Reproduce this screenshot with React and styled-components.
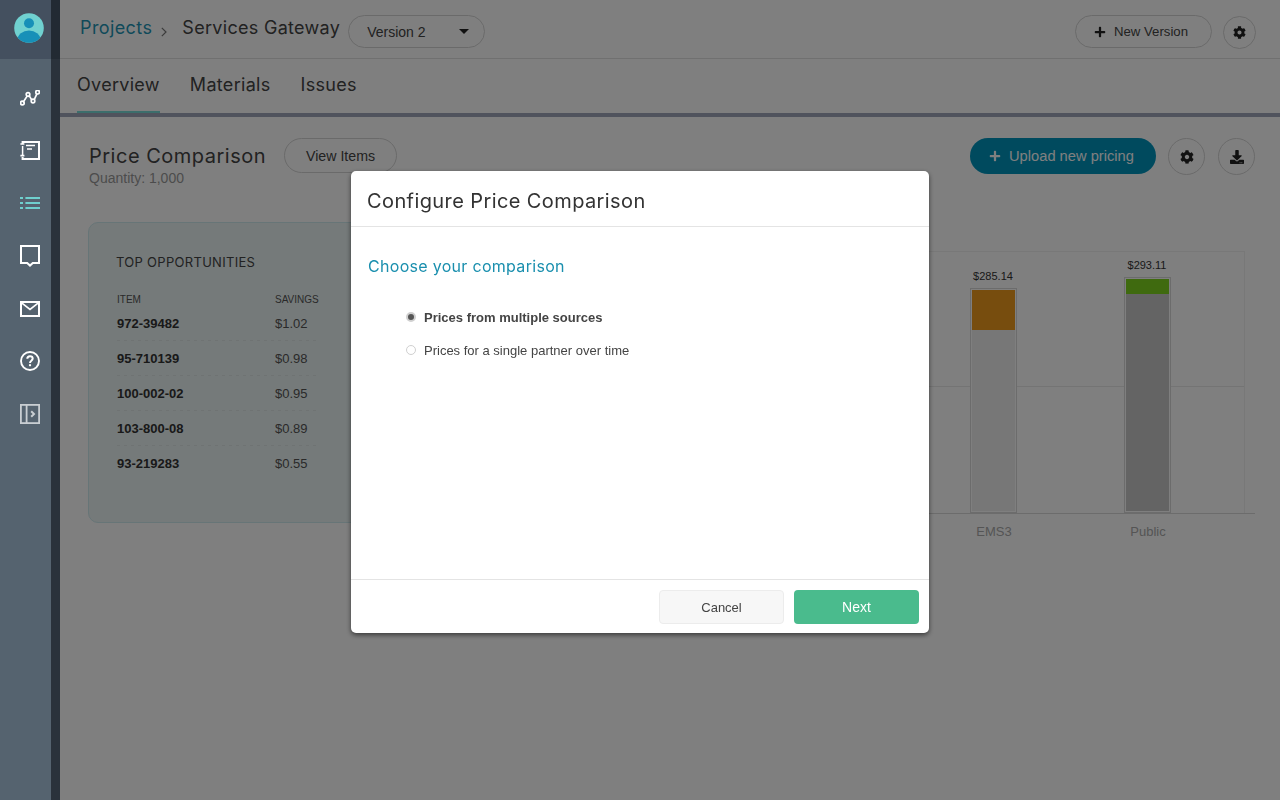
import styled, { createGlobalStyle } from 'styled-components';
import { FaCog, FaPlus, FaDownload } from 'react-icons/fa';

const HEADING_FONT = `Inter, 'Open Sans', sans-serif`;

const opportunities = [
  { item: '972-39482', savings: '$1.02' },
  { item: '95-710139', savings: '$0.98' },
  { item: '100-002-02', savings: '$0.95' },
  { item: '103-800-08', savings: '$0.89' },
  { item: '93-219283', savings: '$0.55' },
];

const bars = [
  { name: 'EMS3', value: '$285.14', height: 225, tone: '#eeeeee', top: '#ee9a1c', topHeight: 40 },
  { name: 'Public', value: '$293.11', height: 236, tone: '#c8c8c8', top: '#7fd41f', topHeight: 15 },
];

const GraphIcon = () => (
  <svg width="20" height="16" viewBox="0 0 20 16" fill="none" stroke="#fff" strokeWidth="1.7">
    <path d="M3 12.5 7.4 5.6M9 5.4l3 5M14 10.2 17 3.6" />
    <circle cx="2.4" cy="13" r="1.8" />
    <circle cx="8" cy="4.5" r="1.8" />
    <circle cx="13" cy="11" r="1.8" />
    <circle cx="17.6" cy="2.2" r="1.8" />
  </svg>
);

const NotebookIcon = () => (
  <svg width="20" height="19" viewBox="0 0 20 19" fill="none" stroke="#fff" strokeWidth="2">
    <path d="M2.6 3V1h16.4v17H2.6v-2" />
    <path d="M2.6 5v9" strokeWidth="1.5" />
    <path d="M0.4 3h4M0.4 14.6h4" strokeWidth="1.6" />
    <path d="M6 4.6h9M7 8h5" strokeWidth="1.5" />
  </svg>
);

const ListIcon = () => (
  <svg width="20" height="14" viewBox="0 0 20 14" fill="none" stroke="#6fd0ce" strokeWidth="2.2">
    <path d="M0 2h3M5.4 2H20M0 7h3M5.4 7H20M0 12h3M5.4 12H20" />
  </svg>
);

const ChatIcon = () => (
  <svg width="20" height="22" viewBox="0 0 20 22" fill="none" stroke="#fff" strokeWidth="2">
    <path d="M1 1h18v17h-6.2L10 20.6 7.2 18H1z" />
  </svg>
);

const MailIcon = () => (
  <svg width="20" height="16" viewBox="0 0 20 16" fill="none" stroke="#fff" strokeWidth="2">
    <rect x="1" y="1" width="18" height="14" />
    <path d="M1 1.4 10 8.4l9-7" strokeWidth="1.7" />
  </svg>
);

const HelpIcon = () => (
  <svg width="20" height="20" viewBox="0 0 20 20" fill="none" stroke="#fff" strokeWidth="1.9">
    <circle cx="10" cy="10" r="9" />
    <path d="M7.3 7.8C7.3 6.2 8.5 5.2 10 5.2s2.7 1 2.7 2.4c0 2.2-2.7 2-2.7 4.3" strokeWidth="2" />
    <path d="M10 13.2v2" strokeWidth="2.1" />
  </svg>
);

const PanelIcon = () => (
  <svg width="20" height="20" viewBox="0 0 20 20" fill="none" stroke="#c9ced2" strokeWidth="1.8">
    <rect x=".9" y=".9" width="18.2" height="18.2" />
    <path d="M6.6 1v18" />
    <path d="M11.2 7.2 14 10l-2.8 2.8" strokeWidth="2" />
  </svg>
);

const AvatarIcon = () => (
  <svg width="30" height="30" viewBox="0 0 30 30">
    <defs>
      <clipPath id="avatar-clip">
        <circle cx="15" cy="15" r="14.8" />
      </clipPath>
    </defs>
    <circle cx="15" cy="15" r="14.8" fill="#70d1d0" />
    <g clipPath="url(#avatar-clip)" fill="#1790b8">
      <circle cx="15" cy="10.2" r="5" />
      <ellipse cx="15" cy="27" rx="11.5" ry="9.6" />
    </g>
  </svg>
);

const navItems = [
  { key: 'graph', icon: <GraphIcon /> },
  { key: 'notebook', icon: <NotebookIcon /> },
  { key: 'list', icon: <ListIcon /> },
  { key: 'chat', icon: <ChatIcon /> },
  { key: 'mail', icon: <MailIcon /> },
  { key: 'help', icon: <HelpIcon /> },
  { key: 'panel', icon: <PanelIcon /> },
];

function App() {
  return (
    <Page>
      <GlobalStyle />
      <Sidebar>
        <AvatarRow>
          <AvatarIcon />
        </AvatarRow>
        <NavList>
          {navItems.map(nav => (
            <NavItem key={nav.key}>{nav.icon}</NavItem>
          ))}
        </NavList>
      </Sidebar>

      <Main>
        <TopBar>
          <ProjectsLink>Projects</ProjectsLink>
          <Crumb width="6" height="10" viewBox="0 0 6 10" fill="none" stroke="#777" strokeWidth="1.2">
            <path d="M.8.8 5 5 .8 9.2" />
          </Crumb>
          <ProjectName>Services Gateway</ProjectName>
          <VersionSelect>
            Version 2
            <Caret />
          </VersionSelect>
          <TopActions>
            <NewVersionButton>
              <FaPlus size={12} />
              New Version
            </NewVersionButton>
            <TopGear size={33}>
              <FaCog size={13} />
            </TopGear>
          </TopActions>
        </TopBar>

        <Tabs>
          <Tab active>Overview</Tab>
          <Tab>Materials</Tab>
          <Tab>Issues</Tab>
        </Tabs>

        <Content>
          <TitleRow>
            <TitleBlock>
              <PageTitle>Price Comparison</PageTitle>
              <Quantity>Quantity: 1,000</Quantity>
            </TitleBlock>
            <ViewItemsButton>View Items</ViewItemsButton>
            <TitleActions>
              <UploadButton>
                <FaPlus size={12} />
                Upload new pricing
              </UploadButton>
              <RoundButton size={37}>
                <FaCog size={14} />
              </RoundButton>
              <RoundButton size={37}>
                <FaDownload size={14} />
              </RoundButton>
            </TitleActions>
          </TitleRow>

          <Panels>
            <OpportunitiesCard>
              <CardTitle>TOP OPPORTUNITIES</CardTitle>
              <TableHead>
                <span>ITEM</span>
                <span>SAVINGS</span>
              </TableHead>
              {opportunities.map(row => (
                <TableRow key={row.item}>
                  <ItemCode>{row.item}</ItemCode>
                  <Savings>{row.savings}</Savings>
                </TableRow>
              ))}
            </OpportunitiesCard>

            <Chart>
              <PlotFrame>
                <Plot>
                  {bars.map(bar => (
                    <BarSlot key={bar.name}>
                      <BarValue>{bar.value}</BarValue>
                      <Bar height={bar.height}>
                        <BarFill tone={bar.top} height={bar.topHeight} />
                        <BarFill tone={bar.tone} grow />
                      </Bar>
                    </BarSlot>
                  ))}
                </Plot>
              </PlotFrame>
              <AxisLabels>
                {bars.map(bar => (
                  <AxisLabel key={bar.name}>{bar.name}</AxisLabel>
                ))}
              </AxisLabels>
            </Chart>
          </Panels>
        </Content>
      </Main>

      <Overlay>
        <Modal>
          <ModalHeader>Configure Price Comparison</ModalHeader>
          <ModalBody>
            <ModalSubtitle>Choose your comparison</ModalSubtitle>
            <RadioGroup>
              <RadioRow>
                <Radio checked />
                <RadioLabel checked>Prices from multiple sources</RadioLabel>
              </RadioRow>
              <RadioRow>
                <Radio />
                <RadioLabel>Prices for a single partner over time</RadioLabel>
              </RadioRow>
            </RadioGroup>
          </ModalBody>
          <ModalFooter>
            <CancelButton>Cancel</CancelButton>
            <NextButton>Next</NextButton>
          </ModalFooter>
        </Modal>
      </Overlay>
    </Page>
  );
}

const GlobalStyle = createGlobalStyle`
  html, body {
    margin: 0;
    padding: 0;
    height: 100%;
    overflow: hidden;
    background: #fff;
    font-family: 'Liberation Sans', Arial, sans-serif;
    color: #333;
  }
  button {
    font-family: inherit;
    cursor: pointer;
  }
`;

const Page = styled.div`
  display: flex;
  width: 1280px;
  height: 800px;
  overflow: hidden;
`;

const Sidebar = styled.nav`
  position: relative;
  z-index: 3;
  flex: 0 0 60px;
  box-sizing: border-box;
  background: #2a323b;
`;

const AvatarRow = styled.div`
  display: flex;
  align-items: center;
  box-sizing: border-box;
  height: 59px;
  padding: 0 0 3px 14px;
  background: linear-gradient(to right, #44505f 51px, #222a33 51px);
`;

const NavList = styled.div`
  width: 51px;
  height: 741px;
  box-sizing: border-box;
  padding: 12.5px 0 0 9px;
  background: #55636f;
`;

const NavItem = styled.div`
  display: flex;
  align-items: center;
  justify-content: center;
  height: 52.7px;
`;

const Main = styled.main`
  flex: 1;
  display: flex;
  flex-direction: column;
  min-width: 0;
`;

const TopBar = styled.header`
  display: flex;
  align-items: center;
  height: 58px;
  flex-shrink: 0;
  padding: 0 24px 0 20px;
  border-bottom: 1px solid #e0e0e0;
`;

const ProjectsLink = styled.a`
  margin-top: -4px;
  font: 400 18px ${HEADING_FONT};
  letter-spacing: 0.4px;
  color: #1f95b5;
`;

const Crumb = styled.svg`
  margin: 5px 15px 0 9px;
`;

const ProjectName = styled.span`
  margin-top: -4px;
  font: 400 18px ${HEADING_FONT};
  letter-spacing: 0.3px;
  color: #444;
`;

const VersionSelect = styled.div`
  display: flex;
  align-items: center;
  justify-content: space-between;
  box-sizing: border-box;
  width: 137px;
  height: 33px;
  margin: 5px 0 0 8px;
  padding: 0 15px 0 18px;
  border: 1px solid #d4d4d4;
  border-radius: 17px;
  font-size: 14px;
  color: #444;
`;

const Caret = styled.span`
  width: 0;
  height: 0;
  border-left: 5px solid transparent;
  border-right: 5px solid transparent;
  border-top: 5px solid #222;
`;

const TopActions = styled.div`
  display: flex;
  align-items: flex-start;
  gap: 11px;
  margin: 6px 0 0 auto;
`;

const NewVersionButton = styled.button`
  display: flex;
  align-items: center;
  gap: 8px;
  box-sizing: border-box;
  width: 137px;
  height: 33px;
  padding: 0 0 0 18px;
  border: 1px solid #d4d4d4;
  border-radius: 17px;
  background: transparent;
  font-size: 13.2px;
  color: #444;
  svg {
    color: #222;
  }
`;

const RoundButton = styled.button`
  display: flex;
  align-items: center;
  justify-content: center;
  width: ${({ size }) => size}px;
  height: ${({ size }) => size}px;
  padding: 0;
  border: 1px solid #d4d4d4;
  border-radius: 50%;
  background: transparent;
  color: #222;
`;

const TopGear = styled(RoundButton)`
  margin-top: 1px;
`;

const Tabs = styled.div`
  display: flex;
  gap: 30px;
  flex-shrink: 0;
  height: 54px;
  padding-left: 17px;
  border-bottom: 4px solid #a0a6ba;
`;

const Tab = styled.div`
  box-sizing: border-box;
  height: 54px;
  padding-top: 15px;
  font: 400 18px ${HEADING_FONT};
  letter-spacing: 0.3px;
  color: #444;
  border-bottom: 2px solid ${({ active }) => (active ? '#78dcd8' : 'transparent')};
`;

const Content = styled.div`
  flex: 1;
  padding: 21px 25px 0 29px;
`;

const TitleRow = styled.div`
  display: flex;
  align-items: flex-start;
`;

const TitleBlock = styled.div`
  display: flex;
  flex-direction: column;
`;

const PageTitle = styled.h1`
  margin: 6px 0 0;
  font: 400 20px/24px ${HEADING_FONT};
  letter-spacing: 0.5px;
  color: #444;
`;

const Quantity = styled.div`
  margin-top: 2px;
  font-size: 14px;
  line-height: 16px;
  color: #999;
`;

const ViewItemsButton = styled.button`
  width: 113px;
  height: 35px;
  margin-left: 18px;
  border: 1px solid #d4d4d4;
  border-radius: 18px;
  background: transparent;
  font-size: 14.2px;
  color: #444;
`;

const TitleActions = styled.div`
  display: flex;
  gap: 13px;
  margin-left: auto;
`;

const UploadButton = styled.button`
  display: flex;
  align-items: center;
  gap: 8px;
  box-sizing: border-box;
  width: 186px;
  height: 36px;
  margin-right: -1px;
  padding: 0 0 0 19px;
  border: 0;
  border-radius: 18px;
  background: #0094bd;
  font-size: 14.7px;
  color: #fff;
`;

const Panels = styled.div`
  display: flex;
  margin: 36px 0 0 -1px;
`;

const OpportunitiesCard = styled.section`
  box-sizing: border-box;
  flex: 0 0 290px;
  height: 301px;
  padding: 31px 0 0 27px;
  border: 1px solid #cfeaee;
  border-radius: 10px;
  background: #eaf4f4;
`;

const CardTitle = styled.h2`
  margin: 0 0 24px;
  font: 400 13px/16px ${HEADING_FONT};
  letter-spacing: 0.3px;
  color: #444;
`;

const TableHead = styled.div`
  display: grid;
  grid-template-columns: 158px 44px;
  font-size: 10px;
  line-height: 12px;
  margin-left: 1px;
  color: #555;
`;

const TableRow = styled.div`
  display: grid;
  grid-template-columns: 158px 44px;
  align-items: center;
  height: 35px;
  margin-left: 1px;
  width: 202px;
  background: repeating-linear-gradient(to right, #dfe6e6 0 3px, transparent 3px 7px) bottom / 100% 1px no-repeat;
  &:last-child {
    background: none;
  }
`;

const ItemCode = styled.span`
  font-size: 13px;
  font-weight: 700;
  color: #333;
`;

const Savings = styled.span`
  margin-top: -1px;
  font-size: 13px;
  color: #555;
`;

const Chart = styled.div`
  flex: 1;
  padding-top: 29px;
`;

const PlotFrame = styled.div`
  padding-right: 10px;
  border-bottom: 1px solid #d8d8d8;
`;

const Plot = styled.div`
  display: flex;
  justify-content: flex-end;
  align-items: flex-end;
  box-sizing: border-box;
  height: 262px;
  padding-right: 20px;
  border-top: 1px solid #f0f0f0;
  border-right: 1px solid #f0f0f0;
  background: linear-gradient(#e8e8e8, #e8e8e8) 0 134px / 100% 1px no-repeat;
`;

const BarSlot = styled.div`
  display: flex;
  flex-direction: column;
  align-items: center;
  width: 154px;
`;

const BarValue = styled.div`
  margin-bottom: 5px;
  font-size: 11px;
  line-height: 13px;
  color: #333;
`;

const Bar = styled.div`
  display: flex;
  flex-direction: column;
  box-sizing: border-box;
  width: 47px;
  height: ${({ height }) => height}px;
  padding: 1px;
  border: 1px solid #d8d8d8;
  background: #fff;
`;

const BarFill = styled.div`
  background: ${({ tone }) => tone};
  ${({ grow, height }) => (grow ? 'flex: 1;' : `height: ${height}px;`)}
`;

const AxisLabels = styled.div`
  display: flex;
  justify-content: flex-end;
  padding: 10px 30px 0 0;
`;

const AxisLabel = styled.div`
  width: 154px;
  text-align: center;
  font-size: 13px;
  line-height: 16px;
  color: #aaa;
`;

const Overlay = styled.div`
  position: fixed;
  inset: 0;
  z-index: 2;
  display: flex;
  align-items: flex-start;
  justify-content: center;
  padding-top: 171px;
  background: rgba(0, 0, 0, 0.5);
`;

const Modal = styled.div`
  display: flex;
  flex-direction: column;
  width: 578px;
  height: 462px;
  border-radius: 5px;
  background: #fff;
  box-shadow: 0 2px 5px rgba(0, 0, 0, 0.55);
`;

const ModalHeader = styled.div`
  box-sizing: border-box;
  height: 56px;
  padding: 17px 16px 0;
  border-bottom: 1px solid #e4e4e4;
  font: 400 20px/26px ${HEADING_FONT};
  letter-spacing: 0.4px;
  color: #333;
`;

const ModalBody = styled.div`
  flex: 1;
  padding: 29px 17px 0;
`;

const ModalSubtitle = styled.h3`
  margin: 0 0 25px;
  font: 400 16px/20px ${HEADING_FONT};
  letter-spacing: 0.3px;
  color: #1a8fae;
`;

const RadioGroup = styled.div`
  display: flex;
  flex-direction: column;
  padding-left: 38px;
`;

const RadioRow = styled.label`
  display: flex;
  align-items: center;
  gap: 8px;
  height: 33px;
`;

const Radio = styled.span`
  box-sizing: border-box;
  width: 10px;
  height: 10px;
  margin-top: -1px;
  border-radius: 50%;
  border: ${({ checked }) => (checked ? '2px solid #d0d0d0' : '1px solid #d0d0d0')};
  background: ${({ checked }) => (checked ? '#555' : '#fff')};
`;

const RadioLabel = styled.span`
  font-size: 13px;
  font-weight: ${({ checked }) => (checked ? 700 : 400)};
  color: #444;
`;

const ModalFooter = styled.div`
  display: flex;
  justify-content: flex-end;
  gap: 10px;
  box-sizing: border-box;
  height: 54px;
  padding: 10px;
  border-top: 1px solid #e4e4e4;
`;

const CancelButton = styled.button`
  width: 125px;
  height: 34px;
  border: 1px solid #ececec;
  border-radius: 4px;
  background: #f7f7f7;
  font-size: 13px;
  color: #444;
`;

const NextButton = styled.button`
  width: 125px;
  height: 34px;
  border: 0;
  border-radius: 4px;
  background: #4abb8d;
  font-size: 14px;
  color: #fff;
`;

export default App;
